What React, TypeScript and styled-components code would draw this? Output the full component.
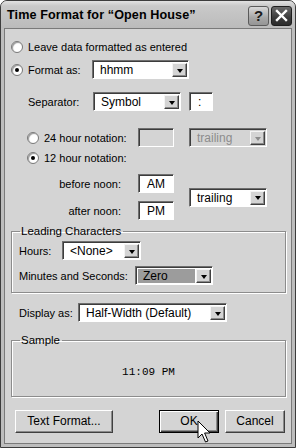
import styled, { createGlobalStyle } from "styled-components";

const GlobalStyle = createGlobalStyle`
  html, body { margin: 0; padding: 0; background: #ffffff; }
  body {
    font-family: "Liberation Sans", Arial, sans-serif;
    font-size: 11px;
    color: #000;
  }
`;

const Window = styled.div`
  position: relative;
  width: 296px;
  height: 448px;
  box-sizing: border-box;
  background: #bdbdbd;
  border: 1px solid #3c3c3c;
  border-radius: 7px 7px 0 0;
  display: flex;
  flex-direction: column;
  overflow: hidden;
`;

const TitleBar = styled.div`
  height: 27px;
  flex-shrink: 0;
  display: flex;
  align-items: center;
  justify-content: space-between;
  padding: 0 3px 0 6px;
  background: linear-gradient(#e2e2e2 0%, #c9c9c9 18%, #c2c2c2 60%, #bbbbbb 100%);
`;

const Title = styled.span`
  font-weight: bold;
  font-size: 12.6px;
  letter-spacing: 0.1px;
  padding-top: 1px;
`;

const TitleButtons = styled.div`
  display: flex;
  gap: 2px;
  padding-top: 2px;
`;

const CapButton = styled.div<{ $dark?: boolean }>`
  width: 21px;
  height: 20px;
  box-sizing: border-box;
  border-radius: 3px;
  border: 1px solid ${(p) => (p.$dark ? "#1e1e1e" : "#5a5a5a")};
  background: ${(p) =>
    p.$dark
      ? "linear-gradient(#6a6a6a, #3a3a3a 60%, #2c2c2c)"
      : "linear-gradient(#d8d8d8, #a6a6a6 60%, #959595)"};
  display: flex;
  align-items: center;
  justify-content: center;
  font-weight: bold;
  font-size: 15px;
  color: #1a1a1a;
`;

const Frame = styled.div`
  flex: 1;
  margin: 0 3px 3px;
  border: 1px solid #7a7a7a;
  background: #d4d4d4;
  display: flex;
  flex-direction: column;
  padding: 8px 0 0 0;
`;

const Row = styled.div<{ $mt?: number; $indent?: number }>`
  display: flex;
  align-items: center;
  height: 19px;
  margin-top: ${(p) => p.$mt ?? 0}px;
  padding-left: ${(p) => p.$indent ?? 0}px;
`;

const Label = styled.span<{ $w?: number; $right?: boolean }>`
  display: inline-block;
  width: ${(p) => (p.$w ? `${p.$w}px` : "auto")};
  text-align: ${(p) => (p.$right ? "right" : "left")};
  white-space: nowrap;
  flex-shrink: 0;
`;

const RadioDot = styled.span<{ $checked?: boolean }>`
  width: 12px;
  height: 12px;
  box-sizing: border-box;
  border-radius: 50%;
  margin-right: 5px;
  background: radial-gradient(circle at 60% 60%, #ffffff 55%, #e6e6e6 100%);
  border: 1px solid #7a7a7a;
  box-shadow: inset 1px 1px 1px #9a9a9a;
  display: inline-flex;
  align-items: center;
  justify-content: center;
  flex-shrink: 0;
  &::after {
    content: "";
    width: 4px;
    height: 4px;
    border-radius: 50%;
    background: #000;
    display: ${(p) => (p.$checked ? "block" : "none")};
  }
`;

const Select = styled.div<{ $w: number; $disabled?: boolean }>`
  width: ${(p) => p.$w}px;
  height: 19px;
  box-sizing: border-box;
  flex-shrink: 0;
  border: 1px solid;
  border-color: #6e6e6e #ffffff #ffffff #6e6e6e;
  box-shadow: inset 1px 1px 0 #3c3c3c;
  background: ${(p) => (p.$disabled ? "#d4d4d4" : "#ffffff")};
  color: ${(p) => (p.$disabled ? "#8c8c8c" : "#000")};
  display: flex;
  align-items: center;
  padding: 2px 1px 1px 2px;
`;

const SelectValue = styled.span<{ $hl?: boolean }>`
  flex: 1;
  align-self: stretch;
  display: flex;
  align-items: center;
  padding-left: 5px;
  margin-right: 1px;
  font-size: 12px;
  background: ${(p) => (p.$hl ? "#9c9c9c" : "transparent")};
  white-space: nowrap;
  overflow: hidden;
`;

const DropButton = styled.span<{ $disabled?: boolean }>`
  width: 15px;
  align-self: stretch;
  box-sizing: border-box;
  background: #d4d4d4;
  border: 1px solid;
  border-color: #f4f4f4 #404040 #404040 #f4f4f4;
  box-shadow: inset -1px -1px 0 #8a8a8a;
  display: flex;
  align-items: center;
  justify-content: center;
  &::after {
    content: "";
    border-left: 3.5px solid transparent;
    border-right: 3.5px solid transparent;
    border-top: 4px solid ${(p) => (p.$disabled ? "#8c8c8c" : "#000")};
    margin-top: 1px;
  }
`;

const TextBox = styled.div<{ $w: number; $ml?: number }>`
  width: ${(p) => p.$w}px;
  height: 19px;
  box-sizing: border-box;
  flex-shrink: 0;
  margin-left: ${(p) => p.$ml ?? 0}px;
  border: 1px solid;
  border-color: #6e6e6e #ffffff #ffffff #6e6e6e;
  box-shadow: inset 1px 1px 0 #3c3c3c;
  background: #ffffff;
  display: flex;
  align-items: center;
  padding-left: 8px;
  font-size: 12px;
`;

const DisabledBox = styled(TextBox)`
  background: #d4d4d4;
`;

const NoonBlock = styled.div`
  display: flex;
  align-items: center;
  margin-top: 7px;
`;

const NoonFields = styled.div`
  display: flex;
  flex-direction: column;
  gap: 8px;
  margin-right: 15px;
`;

const Group = styled.fieldset<{ $mt: number }>`
  margin: ${(p) => p.$mt}px 5px 0 6px;
  padding: 3px 0 7px 7px;
  border: 1px solid #8c8c8c;
  box-shadow: inset 1px 1px 0 #ffffff, 1px 1px 0 #ffffff;
  display: flex;
  flex-direction: column;
  gap: 6px;
`;

const Legend = styled.legend`
  margin-left: 1px;
  padding: 0 2px 0 1px;
  line-height: 14px;
  font-size: 11.5px;
`;

const SampleText = styled.div`
  font-family: "Liberation Mono", "Courier New", monospace;
  font-size: 11px;
  line-height: 14px;
  text-align: center;
  padding: 15px 0 10px 0;
  margin-left: -7px;
`;

const ButtonRow = styled.div`
  display: flex;
  align-items: center;
  margin-top: 13px;
  padding: 0 5px 0 10px;
`;

const Button = styled.div<{ $w: number; $default?: boolean; $ml?: number }>`
  width: ${(p) => p.$w}px;
  height: 23px;
  box-sizing: border-box;
  margin-left: ${(p) => p.$ml ?? 0}px;
  background: #d4d4d4;
  font-size: 12px;
  border: 1px solid;
  border-color: ${(p) =>
    p.$default ? "#000 #000 #000 #000" : "#ffffff #404040 #404040 #ffffff"};
  box-shadow: ${(p) =>
    p.$default
      ? "inset 1px 1px 0 #ffffff, inset -1px -1px 0 #404040, inset -2px -2px 0 #8a8a8a"
      : "inset -1px -1px 0 #8a8a8a"};
  display: flex;
  align-items: center;
  justify-content: center;
  padding-bottom: 1px;
`;

const Cursor = styled.svg`
  position: absolute;
  left: 196px;
  top: 419px;
`;

export default function App() {
  return (
    <>
      <GlobalStyle />
      <Window>
        <TitleBar>
          <Title>Time Format for “Open House”</Title>
          <TitleButtons>
            <CapButton>?</CapButton>
            <CapButton $dark>
              <svg width="13" height="13" viewBox="0 0 13 13">
                <path
                  d="M2 2 L11 11 M11 2 L2 11"
                  stroke="#ffffff"
                  strokeWidth="2.4"
                  strokeLinecap="square"
                />
              </svg>
            </CapButton>
          </TitleButtons>
        </TitleBar>
        <Frame>
          <Row $indent={6}>
            <RadioDot />
            <Label>Leave data formatted as entered</Label>
          </Row>
          <Row $mt={4} $indent={6}>
            <RadioDot $checked />
            <Label $w={64}>Format as:</Label>
            <Select $w={97}>
              <SelectValue>hhmm</SelectValue>
              <DropButton />
            </Select>
          </Row>
          <Row $mt={13} $indent={23}>
            <Label $w={65}>Separator:</Label>
            <Select $w={88}>
              <SelectValue>Symbol</SelectValue>
              <DropButton />
            </Select>
            <TextBox $w={24} $ml={8}>:</TextBox>
          </Row>
          <Row $mt={17} $indent={22}>
            <RadioDot />
            <Label $w={94}>24 hour notation:</Label>
            <DisabledBox $w={36} />
            <Select $w={78} $disabled style={{ marginLeft: 15 }}>
              <SelectValue>trailing</SelectValue>
              <DropButton $disabled />
            </Select>
          </Row>
          <Row $mt={1} $indent={22}>
            <RadioDot $checked />
            <Label>12 hour notation:</Label>
          </Row>
          <NoonBlock>
            <NoonFields>
              <Row>
                <Label $w={116} $right>
                  before noon:
                </Label>
                <TextBox $w={36} $ml={17}>
                  AM
                </TextBox>
              </Row>
              <Row>
                <Label $w={116} $right>
                  after noon:
                </Label>
                <TextBox $w={36} $ml={17}>
                  PM
                </TextBox>
              </Row>
            </NoonFields>
            <Select $w={78}>
              <SelectValue>trailing</SelectValue>
              <DropButton />
            </Select>
          </NoonBlock>
          <Group $mt={4}>
            <Legend>Leading Characters</Legend>
            <Row>
              <Label $w={43}>Hours:</Label>
              <Select $w={79}>
                <SelectValue>&lt;None&gt;</SelectValue>
                <DropButton />
              </Select>
            </Row>
            <Row>
              <Label $w={116}>Minutes and Seconds:</Label>
              <Select $w={78}>
                <SelectValue $hl>Zero</SelectValue>
                <DropButton />
              </Select>
            </Row>
          </Group>
          <Row $mt={10} $indent={14}>
            <Label $w={59}>Display as:</Label>
            <Select $w={149}>
              <SelectValue>Half-Width (Default)</SelectValue>
              <DropButton />
            </Select>
          </Row>
          <Group $mt={11}>
            <Legend>Sample</Legend>
            <SampleText>11:09 PM</SampleText>
          </Group>
          <ButtonRow>
            <Button $w={98}>Text Format...</Button>
            <Button $w={60} $default $ml={46}>
              OK
            </Button>
            <Button $w={60} $ml={6}>
              Cancel
            </Button>
          </ButtonRow>
        </Frame>
        <Cursor width="14" height="24" viewBox="0 0 14 24">
          <path
            d="M1 1 L1 18 L5 14 L8.5 22 L11 21 L7.6 13 L13 13 Z"
            fill="#ffffff"
            stroke="#000000"
            strokeWidth="1"
            strokeLinejoin="miter"
          />
        </Cursor>
      </Window>
    </>
  );
}
